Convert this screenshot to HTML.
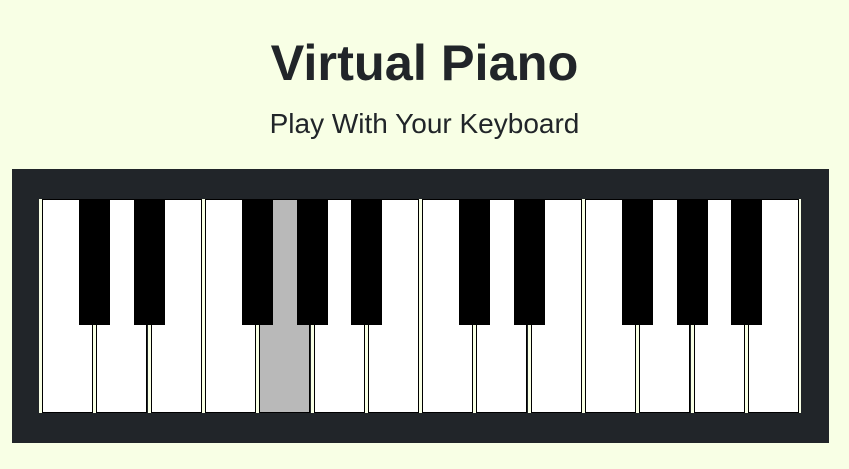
<!DOCTYPE html>
<html><head><style>
html,body{margin:0;padding:0}
body{width:849px;height:469px;background:#f8ffe5;position:relative;overflow:hidden;font-family:"Liberation Sans",sans-serif;color:#212529}
h1{position:absolute;top:35px;left:0;width:849px;text-align:center;margin:0;font-size:50.5px;font-weight:bold;line-height:56px}
h2{position:absolute;top:107px;left:0;width:849px;text-align:center;margin:0;font-size:28px;font-weight:normal;line-height:34px}
.panel{position:absolute;left:12px;top:169px;width:817px;height:274px;background:#212529}
.w{position:absolute;top:199px;background:#fff;border:1px solid #000;box-sizing:border-box;height:214px}
.g{position:absolute;top:199px;height:214px;background:#f8ffe5}
.b{position:absolute;top:199px;height:126px;width:31px;background:#000}
</style></head><body>
<h1>Virtual Piano</h1>
<h2>Play With Your Keyboard</h2>
<div class="panel"></div>
<div id="k"></div>
<script>
var k=document.getElementById('k'),h='',S=54.3;
for(var i=0;i<14;i++){
 var x=42+i*S;
 h+='<div class="g" style="left:'+(x-3)+'px;width:3px"></div>';
 h+='<div class="w" style="left:'+x+'px;width:51px;'+(i==4?'background:#b9b9b9;':'')+'"></div>';
}
h+='<div class="g" style="left:'+(42+14*S-3)+'px;width:2px"></div>';
var bl=[0,1,3,4,5,7,8,10,11,12];
bl.forEach(function(i){var c=42+(i+1)*S-1.5;h+='<div class="b" style="left:'+(c-15.5)+'px"></div>';});
k.innerHTML=h;
</script>
</body></html>
